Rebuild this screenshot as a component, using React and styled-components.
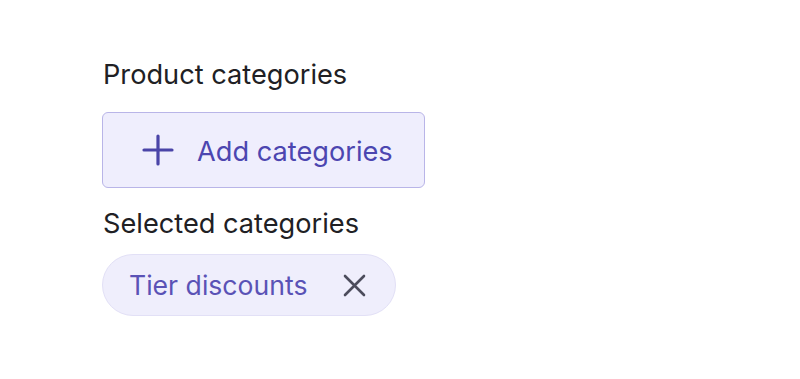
import React from "react";
import styled, { createGlobalStyle } from "styled-components";

const Global = createGlobalStyle`
  html, body { margin: 0; padding: 0; background: #ffffff; }
  body { font-family: Inter, "Noto Sans", sans-serif; -webkit-font-smoothing: antialiased; }
`;

const Page = styled.div`
  width: 800px;
  height: 379px;
  padding: 59px 0 0 102px;
  box-sizing: border-box;
  display: flex;
  flex-direction: column;
  align-items: flex-start;
`;

const Label = styled.div`
  font-size: 27.2px;
  line-height: 32px;
  color: #202024;
  font-weight: 400;
  padding-left: 1px;
  margin-bottom: ${(p) => p.$gap || 0}px;
`;

const AddButton = styled.button`
  display: flex;
  align-items: center;
  gap: 23px;
  height: 76px;
  width: 323px;
  box-sizing: border-box;
  padding: 2px 0 0 39px;
  border: 1.5px solid #b9b5e8;
  border-radius: 6px;
  background: #efeefd;
  color: #4c46b0;
  font-family: inherit;
  font-size: 27.2px;
  font-weight: 400;
  margin-bottom: 20px;
  cursor: pointer;
`;

const Chip = styled.div`
  display: flex;
  align-items: center;
  height: 62px;
  box-sizing: border-box;
  padding: 0 29px 0 26px;
  border: 1.5px solid #e2e0f6;
  border-radius: 31px;
  background: #efeefc;
  color: #5a52b6;
  font-size: 26.6px;
  gap: 36px;
`;

const PlusIcon = () => (
  <svg width="32" height="32" viewBox="0 0 32 32" style={{ marginTop: -2 }}>
    <path d="M16 2v28M2 16h28" stroke="#4a44a8" strokeWidth="3.2" strokeLinecap="round" />
  </svg>
);

const CloseIcon = () => (
  <svg width="23" height="23" viewBox="0 0 23 23">
    <path d="M2 2l19 19M21 2L2 21" stroke="#4c4c5c" strokeWidth="2.6" strokeLinecap="round" />
  </svg>
);

export default function App() {
  return (
    <>
      <Global />
      <Page>
        <Label $gap={21}>Product categories</Label>
        <AddButton>
          <PlusIcon />
          <span>Add categories</span>
        </AddButton>
        <Label $gap={14}>Selected categories</Label>
        <Chip>
          <span>Tier discounts</span>
          <CloseIcon />
        </Chip>
      </Page>
    </>
  );
}
